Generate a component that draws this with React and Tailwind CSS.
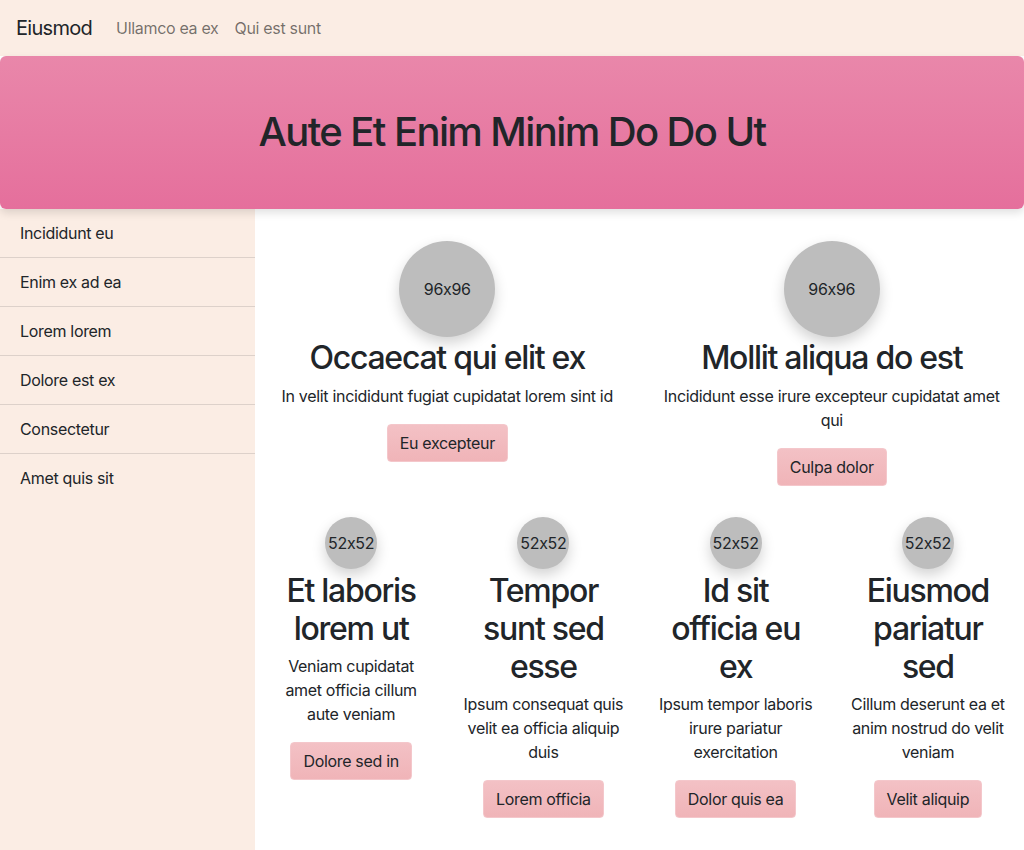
export default function App() {
    const menu = ['Incididunt eu', 'Enim ex ad ea', 'Lorem lorem', 'Dolore est ex', 'Consectetur', 'Amet quis sit'];

    const bigCards = [
        { title: 'Occaecat qui elit ex', text: 'In velit incididunt fugiat cupidatat lorem sint id', button: 'Eu excepteur' },
        { title: 'Mollit aliqua do est', text: 'Incididunt esse irure excepteur cupidatat amet qui', button: 'Culpa dolor' },
    ];

    const smallCards = [
        { title: 'Et laboris lorem ut', text: 'Veniam cupidatat amet officia cillum aute veniam', button: 'Dolore sed in' },
        { title: 'Tempor sunt sed esse', text: 'Ipsum consequat quis velit ea officia aliquip duis', button: 'Lorem officia' },
        { title: 'Id sit officia eu ex', text: 'Ipsum tempor laboris irure pariatur exercitation', button: 'Dolor quis ea' },
        { title: 'Eiusmod pariatur sed', text: 'Cillum deserunt ea et anim nostrud do velit veniam', button: 'Velit aliquip' },
    ];

    const Button = ({ children }) => (
        <button
            type="button"
            className="px-3 py-[6px] leading-6 text-base text-[#212529] rounded bg-gradient-to-b from-[#f3c1c5] to-[#f0b4b8] border border-[#f4c7cb]"
        >
            {children}
        </button>
    );

    return (
        <div className="min-h-[850px] flex flex-col bg-white text-[#212529] tracking-[-0.02em] [font-feature-settings:'calt'_0] font-['Inter','Liberation_Sans',sans-serif]">
            {/* top nav */}
            <nav className="h-14 flex items-center px-4 bg-[#fbede4]">
                <span className="text-xl leading-[30px] mr-4 tracking-[-0.035em]">Eiusmod</span>
                <a className="px-2 text-base text-black/55">Ullamco ea ex</a>
                <a className="px-2 text-base text-black/55">Qui est sunt</a>
            </nav>

            {/* header */}
            <header className="relative z-10 rounded-md bg-gradient-to-b from-[#e987aa] to-[#e56f9c] shadow-[0_4px_8px_rgba(0,0,0,0.12)] pt-[52px] pb-[53px] text-center">
                <h1 className="text-[40px] leading-[48px] font-medium tracking-[-0.04em]">Aute Et Enim Minim Do Do Ut</h1>
            </header>

            <div className="flex flex-1">
                <aside className="w-[255px] shrink-0 bg-[#fbede4]">
                    {menu.map((item) => (
                        <div key={item} className="px-5 py-3 leading-6 text-base border-b border-[#ddd1ca] last:border-b-0">
                            {item}
                        </div>
                    ))}
                </aside>

                <main className="flex-1 pt-8">
                    <div className="grid grid-cols-2">
                        {bigCards.map((c) => (
                            <div key={c.title} className="px-4 pb-[31px] flex flex-col items-center text-center">
                                <div className="w-24 h-24 rounded-full bg-[#bdbdbd] flex items-center justify-center shadow-[0_6px_14px_rgba(0,0,0,0.18)]">
                                    96x96
                                </div>
                                <h2 className="text-[32px] leading-[38px] pt-[2px] mb-[6px] font-medium tracking-[-0.04em]">{c.title}</h2>
                                <p className="leading-6 pt-[1px] mb-4">{c.text}</p>
                                <Button>{c.button}</Button>
                            </div>
                        ))}
                    </div>
                    <div className="grid grid-cols-4">
                        {smallCards.map((c) => (
                            <div key={c.title} className="px-[15px] pb-8 flex flex-col items-center text-center">
                                <div className="w-[52px] h-[52px] rounded-full bg-[#bdbdbd] flex items-center justify-center shadow-[0_6px_14px_rgba(0,0,0,0.18)]">
                                    52x52
                                </div>
                                <h2 className="px-[3px] text-[32px] leading-[38px] pt-[3px] mb-[5px] font-medium tracking-[-0.04em]">{c.title}</h2>
                                <p className="leading-6 pt-[1px] mb-4">{c.text}</p>
                                <Button>{c.button}</Button>
                            </div>
                        ))}
                    </div>
                </main>
            </div>
        </div>
    );
}
